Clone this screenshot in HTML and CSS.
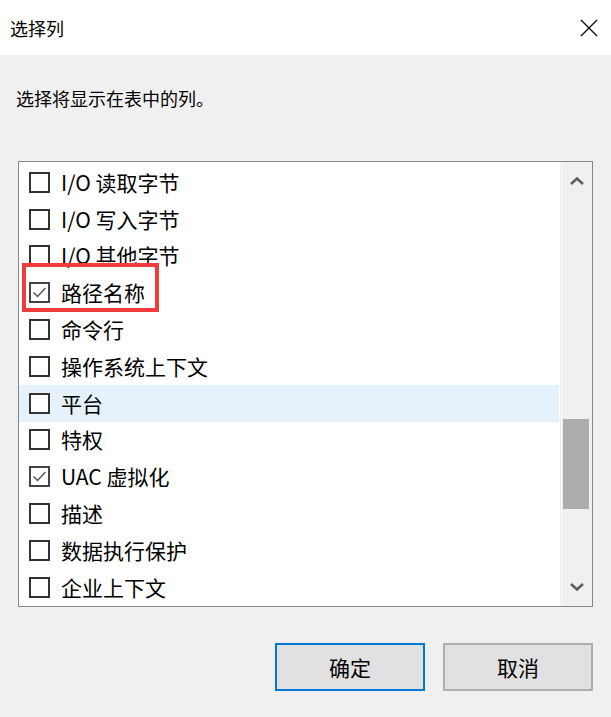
FILE: index.html
```html
<!DOCTYPE html>
<html lang="zh-CN">
<head>
<meta charset="utf-8">
<title>选择列</title>
<link rel="stylesheet" href="styles.css">
</head>
<body>
<div class="window">
  <div class="titlebar">
    <span class="title">选择列</span>
    <svg class="close" width="18" height="18" viewBox="0 0 18 18"><path d="M1 1 L17 17 M17 1 L1 17" stroke="#111" stroke-width="1.4" fill="none"/></svg>
  </div>
  <div class="content">
    <p class="prompt">选择将显示在表中的列。</p>
    <div class="listbox">
      <ul class="rows">
        <li class="row"><span class="cb"></span><span class="label">I/O 读取字节</span></li>
        <li class="row"><span class="cb"></span><span class="label">I/O 写入字节</span></li>
        <li class="row"><span class="cb"></span><span class="label">I/O 其他字节</span></li>
        <li class="row"><span class="cb checked"><svg width="17" height="17" viewBox="0 0 17 17"><polyline points="2.5,8.5 6.5,12.5 14.5,4" stroke="#555" stroke-width="1.5" fill="none"/></svg></span><span class="label">路径名称</span></li>
        <li class="row"><span class="cb"></span><span class="label">命令行</span></li>
        <li class="row"><span class="cb"></span><span class="label">操作系统上下文</span></li>
        <li class="row hover"><span class="cb"></span><span class="label">平台</span></li>
        <li class="row"><span class="cb"></span><span class="label">特权</span></li>
        <li class="row"><span class="cb checked"><svg width="17" height="17" viewBox="0 0 17 17"><polyline points="2.5,8.5 6.5,12.5 14.5,4" stroke="#555" stroke-width="1.5" fill="none"/></svg></span><span class="label">UAC 虚拟化</span></li>
        <li class="row"><span class="cb"></span><span class="label">描述</span></li>
        <li class="row"><span class="cb"></span><span class="label">数据执行保护</span></li>
        <li class="row"><span class="cb"></span><span class="label">企业上下文</span></li>
      </ul>
      <div class="scrollbar">
        <div class="sb-btn"><svg width="16" height="10" viewBox="0 0 16 10"><polyline points="2,8 8,2.5 14,8" stroke="#606060" stroke-width="2.6" fill="none"/></svg></div>
        <div class="sb-track"><div class="sb-thumb" style="margin-top:219px"></div></div>
        <div class="sb-btn"><svg width="16" height="10" viewBox="0 0 16 10"><polyline points="2,2 8,7.5 14,2" stroke="#606060" stroke-width="2.6" fill="none"/></svg></div>
      </div>
      <div class="annotation"></div>
    </div>
    <div class="buttons">
      <button class="btn primary">确定</button>
      <button class="btn">取消</button>
    </div>
  </div>
</div>
</body>
</html>
```

FILE: styles.css
```css
html, body {
  margin: 0;
  padding: 0;
}
body {
  width: 611px;
  height: 717px;
  overflow: hidden;
  background: #f0f0f0;
  font-family: "Noto Sans CJK SC", "Noto Sans", sans-serif;
  color: #000;
}
.window {
  width: 611px;
  height: 717px;
  display: flex;
  flex-direction: column;
}
.titlebar {
  height: 55px;
  background: #fff;
  display: flex;
  align-items: center;
  justify-content: space-between;
  padding: 0 13px 0 10px;
  box-sizing: border-box;
  flex: none;
}
.title {
  font-size: 18px;
  line-height: 24px;
}
.close {
  display: block;
}
.content {
  flex: 1;
  background: #f0f0f0;
  display: flex;
  flex-direction: column;
}
.prompt {
  margin: 31px 0 0 16px;
  font-size: 18px;
  line-height: 24px;
}
.listbox {
  position: relative;
  margin: 51px 0 0 18px;
  width: 575px;
  height: 446px;
  box-sizing: border-box;
  border: 1px solid #828790;
  background: #fff;
  display: flex;
}
.rows {
  list-style: none;
  margin: 0;
  padding: 2px 1px 0 0;
  flex: 1;
  overflow: hidden;
  border-right: 1px solid #e4effb;
}
.row {
  height: 36.8px;
  display: flex;
  align-items: center;
  gap: 11px;
  padding-left: 10px;
  font-size: 21px;
  line-height: 1;
}
.row.hover {
  background: #e5f1fb;
}
.cb {
  width: 21px;
  height: 21px;
  box-sizing: border-box;
  border: 2px solid #333;
  background: #fff;
  flex: none;
  display: flex;
  align-items: center;
  justify-content: center;
}
.cb.checked {
  border-color: #444;
}
.cb svg {
  display: block;
}
.label {
  white-space: nowrap;
}
.scrollbar {
  width: 30px;
  flex: none;
  margin-left: 1px;
  background: #f0f0f0;
  display: flex;
  flex-direction: column;
}
.sb-btn {
  height: 38px;
  display: flex;
  align-items: center;
  justify-content: center;
  flex: none;
}
.sb-track {
  flex: 1;
}
.sb-thumb {
  width: 26px;
  height: 90px;
  margin-left: 1px;
  background: #acacac;
}
.annotation {
  position: absolute;
  left: 3px;
  top: 101px;
  width: 137px;
  height: 49px;
  box-sizing: border-box;
  border: 4px solid #f23b3b;
  pointer-events: none;
}
.buttons {
  display: flex;
  justify-content: flex-end;
  gap: 18px;
  padding-right: 18px;
  margin-top: 36px;
}
.btn {
  width: 150px;
  height: 48px;
  box-sizing: border-box;
  border: 2px solid #adadad;
  background: #e1e1e1;
  font-family: "Noto Sans CJK SC", "Noto Sans", sans-serif;
  font-size: 21px;
  line-height: 1;
  color: #000;
  padding: 0;
  border-radius: 0;
}
.btn.primary {
  border-color: #0078d7;
}
```
